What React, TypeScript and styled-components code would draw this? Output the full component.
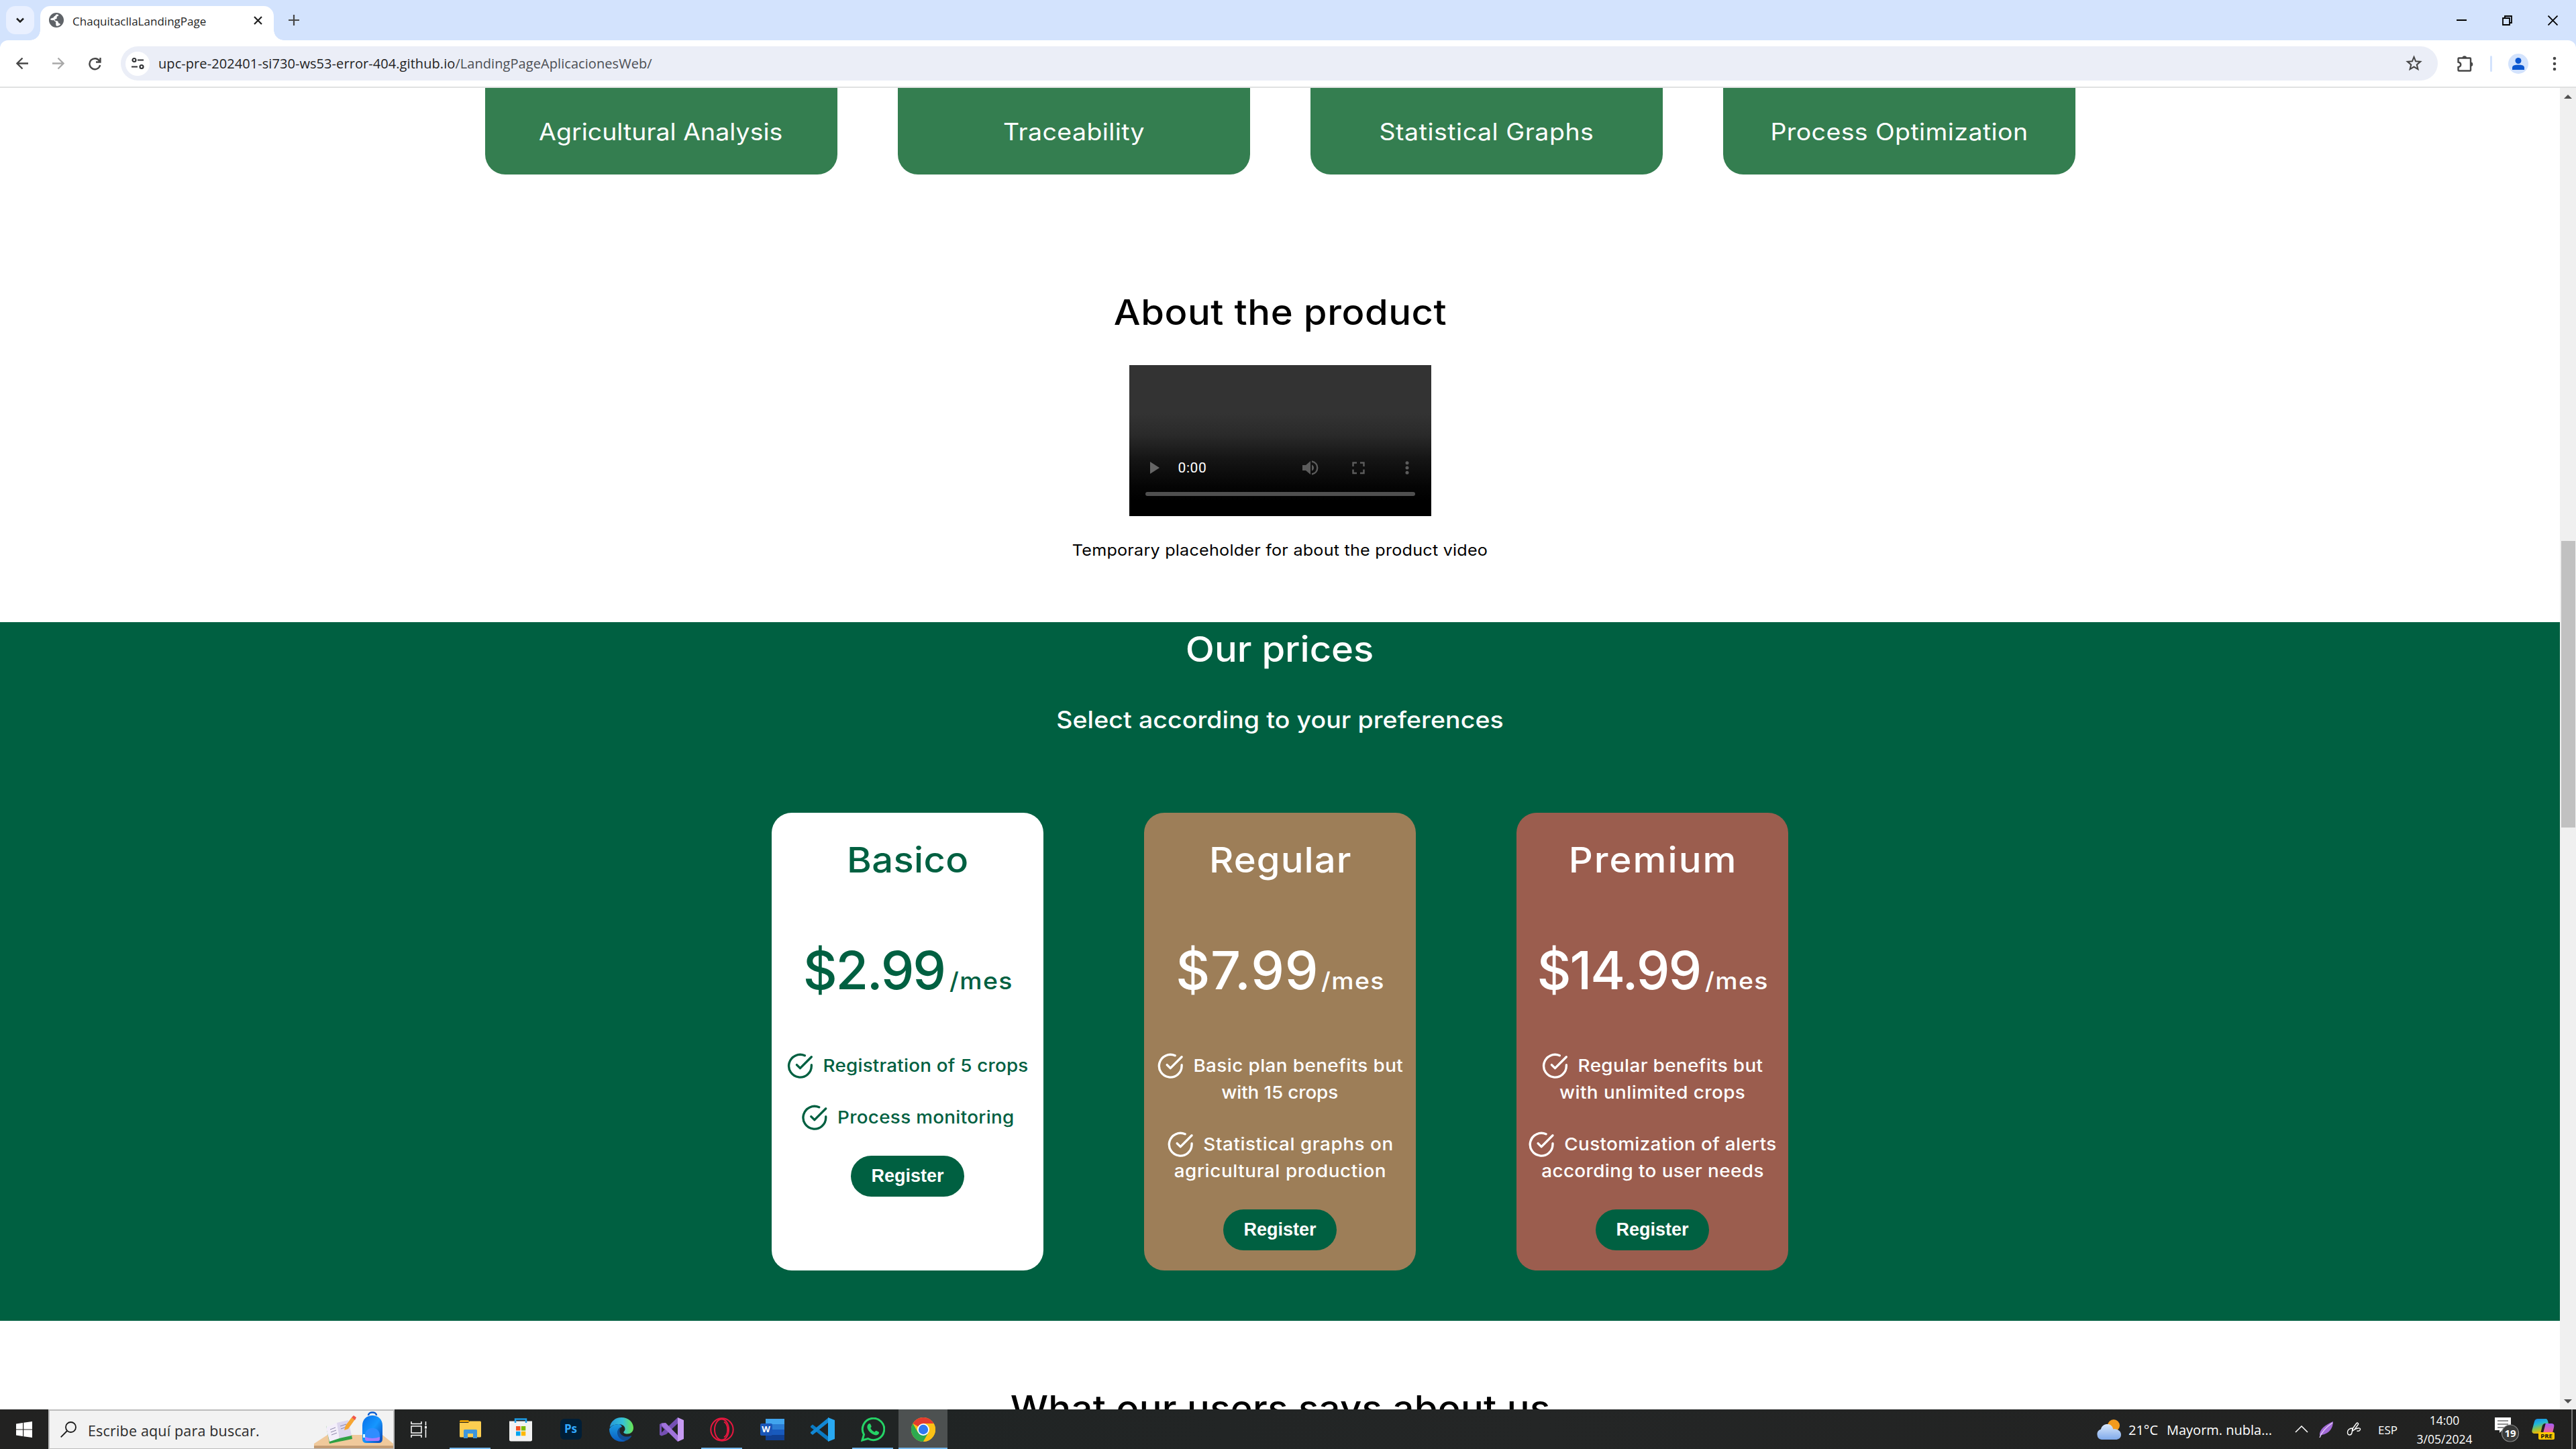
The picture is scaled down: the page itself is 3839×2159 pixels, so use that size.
import React from "react";
import styled, { createGlobalStyle } from "styled-components";

const GREEN = "#006041";

/* Horizontal stretch that gives the page face its wide, round letters. */
const WIDE = 1.07;

const GlobalStyle = createGlobalStyle`
  * { box-sizing: border-box; }
  html, body { margin: 0; padding: 0; }
  body { width: 3839px; height: 2159px; overflow: hidden; background: #fff; }
  svg { display: block; flex: none; }
`;

const Screen = styled.div`
  width: 3839px;
  height: 2159px;
  display: flex;
  flex-direction: column;
  overflow: hidden;
  font-family: Inter, "Liberation Sans", sans-serif;
`;

/* ---------- Browser chrome ---------- */

const TabStrip = styled.div`
  height: 60px;
  flex: none;
  display: flex;
  align-items: flex-end;
  padding-left: 9px;
  background: #d3e3fd;
`;

const TabSearch = styled.div`
  width: 42px;
  height: 42px;
  margin: 0 9px 9px 0;
  border-radius: 14px;
  background: #e9f0ff;
  display: flex;
  align-items: center;
  justify-content: center;
`;

const Tab = styled.div`
  position: relative;
  width: 348px;
  height: 51px;
  padding: 0 17px 9px 13px;
  display: flex;
  align-items: center;
  border-radius: 15px 15px 0 0;
  background: #fff;
  &::before,
  &::after {
    content: "";
    position: absolute;
    bottom: 0;
    width: 15px;
    height: 15px;
  }
  &::before {
    left: -15px;
    background: radial-gradient(circle at 0 0, transparent 14.5px, #fff 15px);
  }
  &::after {
    right: -15px;
    background: radial-gradient(circle at 100% 0, transparent 14.5px, #fff 15px);
  }
`;

const TabTitle = styled.span`
  flex: 1;
  padding: 3px 0 0 13px;
  font: 400 17px/24px "Open Sans", sans-serif;
  letter-spacing: 0.02px;
  color: #1f1f1f;
`;

const NewTab = styled.div`
  width: 60px;
  height: 60px;
  display: flex;
  align-items: center;
  justify-content: center;
`;

const WindowControls = styled.div`
  margin-left: auto;
  height: 60px;
  display: flex;
`;

const WindowButton = styled.div`
  width: 68.4px;
  display: flex;
  align-items: center;
  justify-content: center;
`;

const ToolbarBack = styled.div`
  height: 71px;
  flex: none;
  background: #d3e3fd;
`;

const Toolbar = styled.div`
  height: 71px;
  display: flex;
  align-items: center;
  padding: 0 17px 0 7px;
  background: #fff;
  border-bottom: 2px solid #e0e1e1;
  border-radius: 12px 12px 0 0;
`;

const ToolCell = styled.div<{ $w: number; $shift?: number }>`
  width: ${(p) => p.$w}px;
  padding-left: ${(p) => p.$shift ?? 0}px;
  display: flex;
  align-items: center;
  justify-content: center;
`;

const Omnibox = styled.div`
  flex: 1;
  height: 51px;
  margin-left: 12px;
  padding: 0 23px 0 7px;
  display: flex;
  align-items: center;
  border-radius: 26px;
  background: #ebeef7;
`;

const SiteInfo = styled.div`
  width: 36px;
  height: 36px;
  margin-right: 13px;
  border-radius: 50%;
  background: #fff;
  display: flex;
  align-items: center;
  justify-content: center;
`;

const Url = styled.div`
  flex: 1;
  font: 400 20px/26px "Open Sans", sans-serif;
  letter-spacing: 0.07px;
  color: #1f1f1f;
`;

const UrlPath = styled.span`
  color: #4c4f54;
`;

const Separator = styled.div`
  width: 3px;
  height: 24px;
  border-radius: 2px;
  background: #d3e3fd;
`;

const Avatar = styled.div`
  width: 30px;
  height: 30px;
  border-radius: 50%;
  background: #d3e3fd;
  overflow: hidden;
`;

/* ---------- Page ---------- */

const Viewport = styled.div`
  height: 1969px;
  flex: none;
  display: flex;
  overflow: hidden;
`;

const Page = styled.main`
  flex: 1;
  height: 1969px;
  overflow: hidden;
  background: #fff;
`;

const Scrollbar = styled.div`
  width: 24px;
  padding: 10px 0 9px;
  display: flex;
  flex-direction: column;
  align-items: center;
  background: #f0f0f0;
`;

const ScrollThumb = styled.div`
  width: 21px;
  height: 427px;
  margin: 659px 0 auto;
  background: #c1c1c1;
`;

const Text = styled.span<{ $ls: number }>`
  display: block;
  white-space: nowrap;
  letter-spacing: ${(p) => p.$ls}px;
  margin-right: ${(p) => -p.$ls}px;
`;

const WideText = styled(Text)`
  transform: scaleX(${WIDE});
`;

const ServiceRow = styled.section`
  height: 129px;
  display: flex;
  justify-content: center;
  gap: 90px;
`;

const ServiceCard = styled.div`
  width: 525px;
  padding-top: 38px;
  display: flex;
  justify-content: center;
  border-radius: 0 0 30px 30px;
  background: #347e50;
  color: #fff;
  font-size: 35px;
  line-height: 54px;
`;

const Section = styled.section<{ $pt: number; $h?: number; $green?: boolean }>`
  height: ${(p) => (p.$h ? `${p.$h}px` : "auto")};
  padding-top: ${(p) => p.$pt}px;
  display: flex;
  flex-direction: column;
  align-items: center;
  background: ${(p) => (p.$green ? GREEN : "#fff")};
  color: ${(p) => (p.$green ? "#fff" : "#000")};
`;

const Heading = styled.h2`
  margin: 0;
  font-size: 52.5px;
  font-weight: 500;
  line-height: 81px;
`;

const Subtitle = styled.h3`
  margin: 37px 0 112px;
  font-size: 35px;
  font-weight: 500;
  line-height: 54px;
`;

const Video = styled.div`
  width: 450px;
  height: 225px;
  margin: 38px 0 33px;
  padding: 0 24px 30px;
  display: flex;
  flex-direction: column;
  justify-content: flex-end;
  background: linear-gradient(#333 0, #333 32%, #2a2a2a 46%, #151515 62%, #050505 80%, #000 90%);
`;

const VideoControls = styled.div`
  height: 30px;
  margin-bottom: 21px;
  display: flex;
  align-items: center;
`;

const VideoTime = styled.span`
  flex: 1;
  padding-left: 28px;
  font: 400 21px/30px Roboto, sans-serif;
  letter-spacing: 0.6px;
  color: #fff;
`;

const ControlIcon = styled.div<{ $gap: number }>`
  margin-left: ${(p) => p.$gap}px;
`;

const VideoTrack = styled.div`
  height: 6px;
  border-radius: 3px;
  background: #4f4f4f;
`;

const Caption = styled.p`
  margin: 0;
  font-size: 23.5px;
  line-height: 36px;
`;

const Plans = styled.div`
  display: flex;
  gap: 150px;
`;

const PlanCard = styled.article<{ $bg: string; $fg: string }>`
  width: 405px;
  height: 682px;
  padding-top: 30px;
  display: flex;
  flex-direction: column;
  align-items: center;
  border-radius: 30px;
  background: ${(p) => p.$bg};
  color: ${(p) => p.$fg};
  font-weight: 500;
`;

const Price = styled.div`
  height: 120px;
  margin: 63px 0;
  display: flex;
  align-items: baseline;
  gap: 5px;
  font-size: 79px;
  line-height: 120px;
`;

const Period = styled.span`
  margin-right: 6px;
  font-size: 35px;
  line-height: 42px;
  transform: scaleX(${WIDE});
  transform-origin: left;
`;

const Feature = styled.div`
  margin-bottom: 37px;
  display: flex;
  flex-direction: column;
  align-items: center;
  font-size: 26px;
  line-height: 40px;
`;

const FeatureLine = styled.div`
  height: 40px;
  display: flex;
  align-items: center;
  gap: 13px;
  transform: scaleX(${WIDE});
`;

const RegisterButton = styled.button`
  width: 169px;
  height: 61px;
  padding: 0 0 1px;
  border: 0;
  border-radius: 31px;
  background: ${GREEN};
  color: #fff;
  font: 700 27px/40px "Liberation Sans", Arial, sans-serif;
`;

/* ---------- Taskbar ---------- */

const Taskbar = styled.footer`
  height: 59px;
  flex: none;
  display: flex;
  background: linear-gradient(90deg, #222221, #202424 35%, #242626 60%, #212120);
  color: #fff;
  font-family: "Open Sans", sans-serif;
`;

const TaskCell = styled.div<{ $w: number; $shift?: number }>`
  width: ${(p) => p.$w}px;
  flex: none;
  padding-left: ${(p) => p.$shift ?? 0}px;
  display: flex;
  align-items: center;
  justify-content: center;
`;

const SearchBox = styled.div`
  width: 516px;
  flex: none;
  padding-left: 16px;
  display: flex;
  align-items: center;
  border: 2px solid #bcbcbc;
  border-bottom-width: 1px;
  background: #f2f2f2;
`;

const SearchText = styled.span`
  flex: 1;
  padding: 3px 0 0 17px;
  font-size: 21.5px;
  line-height: 30px;
  letter-spacing: 0.17px;
  color: #2b2b2b;
`;

const Apps = styled.div`
  display: flex;
  margin-left: 3px;
`;

const AppButton = styled.div<{ $open?: boolean; $active?: boolean }>`
  width: ${(p) => (p.$active ? 73 : p.$open ? 61 : 75)}px;
  margin: 0 ${(p) => (p.$active ? 1 : p.$open ? 7 : 0)}px;
  display: flex;
  align-items: center;
  justify-content: center;
  background: ${(p) => (p.$active ? "#4d5151" : "transparent")};
  box-shadow: ${(p) => (p.$open || p.$active ? "inset 0 -2px #76b9ed" : "none")};
`;

const Tray = styled.div`
  margin-left: auto;
  display: flex;
  align-items: stretch;
`;

const TrayText = styled.div<{ $w: number; $size: number; $center?: boolean }>`
  width: ${(p) => p.$w}px;
  padding-top: 2px;
  display: flex;
  align-items: center;
  justify-content: ${(p) => (p.$center ? "center" : "flex-start")};
  font-size: ${(p) => p.$size}px;
  white-space: nowrap;
`;

const Clock = styled.div`
  width: 112px;
  padding-top: 2px;
  text-align: center;
  font-size: 17.5px;
  line-height: 28px;
`;

const ShowDesktop = styled.div`
  width: 7px;
  margin-left: 22px;
  border-left: 2px solid #777;
`;

/* ---------- Icons ---------- */

const Line = ({ d, w, h, vb, c = "#474747", s = 2 }: { d: string; w: number; h: number; vb: string; c?: string; s?: number }) => (
  <svg width={w} height={h} viewBox={vb} fill="none" stroke={c} strokeWidth={s}>
    <path d={d} />
  </svg>
);

const Globe = () => (
  <svg width="22" height="22" viewBox="0 0 22 22">
    <circle cx="11" cy="11" r="11" fill="#5f6368" />
    <path d="M11.5 2.2c-2 1-1.8 2.6-3.4 3-1.3.4-.8 2.2-2 2.4-1.4.2-3.4.8-4 2 0 1.500 2.600 1.600 4.500 1.500 1.700 0 1 1.700 2.600 1.900 1.200.2 1 1.200 1 2.300 0 1.500 0 2.500.8 4.500 2.500 0 4.400-.8 6-2.400-.6-2-3-1.200-3-2.600 0-1.500-1.300-2.500-2.600-2.800-2 0-3.100-.6-2.900-1.800.2-1.200 2.400-.6 3.200-1.800.7-1-.9-1.900.3-2.800.9-.7 2-.6 2.300-1.600.2-.8-1-1.800-2.800-1.800z" fill="#fff" />
  </svg>
);

/* Narrowed by the line's own stretch, so that the ring is drawn round. */
const CheckCircle = () => (
  <svg width={40.5 / WIDE} height="40.5" viewBox="0 0 24 24" preserveAspectRatio="none" fill="none" stroke="currentColor" strokeWidth="2" strokeLinecap="round" strokeLinejoin="round">
    <path d="M22 11.080V12a10 10 0 1 1-5.930-9.140" />
    <path d="M22 4 12 14.010l-3-3" />
  </svg>
);

const SearchArt = () => (
  <svg width="120" height="56" viewBox="468 2102 120 56">
    <defs>
      <linearGradient id="bag" x1="0" x2="1" y2="1"><stop offset="0" stopColor="#0a6fe8" /><stop offset=".5" stopColor="#1597ff" /><stop offset="1" stopColor="#0b45b5" /></linearGradient>
    </defs>
    <path d="M490 2138h82l16 13v4H470v-4z" fill="#f0c99b" />
    <path d="M470 2154h118v4H470z" fill="#c39b73" />
    <path d="m488 2124 5 27 34-7-1-6-32 6z" fill="#2fa044" />
    <path d="m488 2127 16-7 4 23-15 5z" fill="#f3eefa" />
    <path d="m504 2120 17-4 5 23-18 4z" fill="#dcd6ee" />
    <path d="m494 2130 8-3m-7 7 8-3m-7 7 8-3m5-10 9-3m-8 7 9-3" stroke="#8c86a8" strokeWidth="1" />
    <path d="m515 2131 2-7 9-12 5 3-10 14z" fill="#f6a531" />
    <path d="m526 2112 3-3 4 3-2 4z" fill="#f0584a" />
    <path d="M551 2109c0-6 12-6 12 0" fill="none" stroke="#0b5ed0" strokeWidth="2.500" />
    <path d="M542 2124c0-20 30-20 30 0v20q0 6-6 6h-18q-6 0-6-6z" fill="url(#bag)" />
    <path d="M546 2139c0-15 22-15 22 0v5q0 3-3 3h-16q-3 0-3-3z" fill="#2f8dff" />
    <path d="M546 2141q11 4 22 0v3q0 3-3 3h-16q-3 0-3-3z" fill="#a67cff" />
    <rect x="543" y="2137" width="3" height="5" fill="#dff" />
  </svg>
);

const Explorer = () => (
  <svg width="32" height="28" viewBox="0 0 32 28">
    <path d="M0 1.500Q0 0 1.500 0H13l2 3H0z" fill="#e09b00" />
    <path d="M0 4h13l2-2.500h15.500Q32 1.500 32 3v21q0 1.500-1.500 1.500h-29Q0 25.500 0 24z" fill="#fcce51" />
    <path d="M6 27V15.500Q6 14 7.500 14h17q1.500 0 1.500 1.500V27h-6v-7h-8v7z" fill="#3d96dc" />
  </svg>
);

const Store = () => (
  <svg width="36" height="36" viewBox="0 0 36 36">
    <path d="M1 5.500h34V33q0 2.500-2.500 2.500h-29Q1 35.500 1 33z" fill="#f2f2f2" />
    <path d="M10 8V2.500h16V8" fill="none" stroke="#1f9ee8" strokeWidth="2.500" />
    <path d="M11 13h6.500v6.500H11z" fill="#f25022" /><path d="M18.800 13h6.500v6.500h-6.500z" fill="#7fba00" />
    <path d="M11 20.800h6.500v6.500H11z" fill="#00a4ef" /><path d="M18.800 20.800h6.500v6.500h-6.500z" fill="#ffb900" />
  </svg>
);

const PhotoshopBox = styled.div`
  width: 32px;
  height: 31px;
  border-radius: 6px;
  background: #001e36;
  color: #31a8ff;
  text-align: center;
  font: 700 17px/29px "Open Sans", sans-serif;
`;

const Edge = () => (
  <svg width="36" height="36" viewBox="0 0 36 36">
    <defs>
      <linearGradient id="e1" x1="0" x2="1"><stop offset="0" stopColor="#2597d8" /><stop offset=".55" stopColor="#35c1d8" /><stop offset="1" stopColor="#6ae84f" /></linearGradient>
      <linearGradient id="e2" x2="0" y2="1"><stop offset="0" stopColor="#1b9de2" /><stop offset="1" stopColor="#0a5cc0" /></linearGradient>
    </defs>
    <path d="M.6 15C2 6 9 0 18 0c11 0 18 7.500 18 15.500 0 6-4.500 9-9 9-4 0-6.500-1.500-5.500-3 1.500-1.700 2-2.500 2-4.500 0-4-4-7-9.500-7-6 0-11 2.500-13.400 5z" fill="url(#e1)" />
    <path d="M14 10c-7 0-12.500 3.500-14 7.500C0 28 8 36 18 36c3 0 5-.5 7-1.500-8-1-12.500-6.500-12.500-12 0-5 3-7.500 6.500-8.500-1-2.500-3-4-5-4z" fill="url(#e2)" />
    <path d="M17 14.500c-3 1.500-5 4.500-5 8 0 6 5 12 13 12 3.500-1.300 6-3.500 8-6.300.4-.8-.2-1.300-.9-.9-1.500.8-3.500 1.300-5.600 1.300-6.500 0-11-4-11-8.600 0-2.300.9-4 1.500-5.500z" fill="#114d93" />
  </svg>
);

const VisualStudio = () => (
  <svg width="36" height="36" viewBox="0 0 36 36">
    <path fillRule="evenodd" d="M0 10l3-1.500 7.500 7L27 0v9L10 25l-7 2.500L0 26zM3 13.500v9l4.500-4.500z" fill="#7550b4" />
    <path d="M3 8.500 9 8l18 18.500V36L3 12z" fill="#a173dc" />
    <path d="m27 0 9 4v28l-9 4z" fill="#c79af2" />
  </svg>
);

const Opera = () => (
  <svg width="36" height="36" viewBox="0 0 36 36" fill="none" stroke="#e8173f">
    <circle cx="18" cy="18" r="16.700" strokeWidth="2" />
    <ellipse cx="17.500" cy="18" rx="10.500" ry="15.500" strokeWidth="2" />
    <path d="M21 6.500c7 4 7 19 0 23" strokeWidth="1.800" />
  </svg>
);

const WordBox = styled.div`
  width: 36px;
  height: 32px;
  padding: 7px 0 7px;
  background: linear-gradient(#41a5ee 0 25%, #2b7cd3 0 50%, #185abd 0 75%, #103f91 0) 8px 0 / 28px 32px no-repeat;
`;

const WordBadge = styled.div`
  width: 18px;
  height: 18px;
  border-radius: 2px;
  background: #1a56b8;
  text-align: center;
  font: 700 13px/17px "Open Sans", sans-serif;
`;

const VsCode = () => (
  <svg width="36" height="36" viewBox="0 0 36 36">
    <path d="M0 13l3-2.500L27 29v7L0 14.500z" fill="#0a7bc4" />
    <path d="M0 23.500l3 2.500L27 7V0L0 22z" fill="#1288d4" />
    <path d="m26 0 10 4v28l-10 4z" fill="#29a9f2" />
  </svg>
);

const WhatsApp = () => (
  <svg width="36" height="36" viewBox="0 0 36 36">
    <path d="M2 34 4.500 25.500A16.200 16.200 0 1 1 10.500 31.500z" fill="none" stroke="#25d366" strokeWidth="3" />
    <path d="M11.500 9.500c.9-.8 2.300-.7 2.800.4l1.300 3c.3.9-.2 1.500-1.400 2.800 1.500 2.900 3.600 4.800 6.400 6 1.200-1.400 1.700-2.200 2.800-1.700l3 1.500c.9.500.7 2.200-.2 3.300-1.500 1.800-4 2-6.700 1-4.500-1.700-7.500-4.600-9.500-8.800-1.200-2.600-.7-5.700 1.500-7.500z" fill="#25d366" />
  </svg>
);

const Chrome = () => (
  <svg width="36" height="36" viewBox="0 0 36 36">
    <circle cx="18" cy="18" r="18" fill="#fbc116" />
    <path d="M18 18 2.400 9A18 18 0 0 1 33.600 9z" fill="#e33b2e" />
    <path d="M2.400 9A18 18 0 0 0 18 36l7.800-13.500L18 18l-7.800 4.500z" fill="#2da94f" />
    <path d="M18 9h15.600A18 18 0 0 1 18 36l7.800-13.500z" fill="#fbc116" />
    <circle cx="18" cy="18" r="9" fill="#fff" />
    <circle cx="18" cy="18" r="7.200" fill="#3079f0" />
  </svg>
);

const Weather = () => (
  <svg width="37" height="30" viewBox="0 0 37 30">
    <defs><linearGradient id="cl" x2="0" y2="1"><stop offset="0" stopColor="#dbe9fb" /><stop offset="1" stopColor="#7fa9ea" /></linearGradient></defs>
    <circle cx="26" cy="9" r="9" fill="#f39a1c" />
    <path d="M8 30a8 8 0 0 1-1-15.500C8 9 13 6.500 17.500 7c4.500.500 7 3.500 7.800 7.500C31 13 37 17 37 22.500S33 30 29 30z" fill="url(#cl)" />
  </svg>
);

const Feather = () => (
  <svg width="22" height="24" viewBox="0 0 22 24">
    <path d="M1 21C0 12 9 5 21 0c0 9-5 18-17 20z" fill="#a36bd8" />
    <path d="M1 24C4 15 10 9 20 2" stroke="#e7cffb" strokeWidth="1.300" fill="none" />
  </svg>
);

const Pen = () => (
  <svg width="22" height="22" viewBox="0 0 22 22" fill="none" stroke="#fff" strokeWidth="1.400">
    <path d="m9 13 .5-4L15 1.500q1-1 2 0t.3 2L12 11z" />
    <path d="M9 9c-5 0-8 3-7.500 7S7 20 8 16l1-7m3 2c3-2 8-3 8.500-1s-2 4-5 3" />
  </svg>
);

const Notifications = () => (
  <svg width="38" height="38" viewBox="3717 2117 38 38">
    <path d="M3718 2118h24v19h-13l-4 4v-4h-7z" fill="#fff" />
    <path d="M3722 2123h16m-16 5h16m-16 5h10" stroke="#222" strokeWidth="1.200" />
    <circle cx="3741" cy="2141.500" r="12.500" fill="#3a3b3a" stroke="#8b8b8b" strokeWidth="1.200" />
    <text x="3741" y="2147" textAnchor="middle" fill="#fff" fontFamily="Open Sans" fontWeight="700" fontSize="15">19</text>
  </svg>
);

const Copilot = () => (
  <svg width="34" height="32" viewBox="0 0 34 32">
    <defs>
      <linearGradient id="c1" x2=".3" y2="1"><stop offset="0" stopColor="#1684e8" /><stop offset=".4" stopColor="#20b8d8" /><stop offset=".7" stopColor="#8bc34a" /><stop offset="1" stopColor="#f7b500" /></linearGradient>
      <linearGradient id="c2" x2="0" y2="1"><stop offset="0" stopColor="#a45cf5" /><stop offset="1" stopColor="#f4648c" /></linearGradient>
    </defs>
    <path d="M9 0h12c2 0 3 2 4 7h-5c-3 0-4 2-5 7l-2 8H5c-4 0-5-2-4.500-5L4 4c1-3 2.500-4 5-4z" fill="url(#c1)" />
    <path d="M21 7h8c4 0 5 2 4 6l-2 8H17l3-11c0-1 .4-2 1-3z" fill="url(#c2)" />
    <rect x="10" y="20" width="24" height="11" rx="2" fill="#ffc700" />
    <text x="22" y="29" textAnchor="middle" fill="#111" fontFamily="Open Sans" fontWeight="700" fontSize="9.500">PRE</text>
  </svg>
);

/* ---------- Content ---------- */

type Copy = [text: string, spacing: number];

const services: Copy[] = [
  ["Agricultural Analysis", 0.02],
  ["Traceability", 0.39],
  ["Statistical Graphs", 0.5],
  ["Process Optimization", 0.4],
];

const plans: { name: Copy; price: Copy; bg: string; fg: string; features: Copy[][] }[] = [
  {
    name: ["Basico", 0.3],
    price: ["$2.99", -2.3],
    bg: "#fff",
    fg: GREEN,
    features: [[["Registration of 5 crops", 0.19]], [["Process monitoring", 0.29]]],
  },
  {
    name: ["Regular", 1.0],
    price: ["$7.99", 0.8],
    bg: "#9d7e58",
    fg: "#fff",
    features: [
      [["Basic plan benefits but", 0.4], ["with 15 crops", -0.1]],
      [["Statistical graphs on", 0.53], ["agricultural production", 0.56]],
    ],
  },
  {
    name: ["Premium", 1.9],
    price: ["$14.99", -2],
    bg: "#9b5d4e",
    fg: "#fff",
    features: [
      [["Regular benefits but", 0.35], ["with unlimited crops", 0.42]],
      [["Customization of alerts", 0.34], ["according to user needs", 0.4]],
    ],
  },
];

const apps: { icon: React.ReactNode; open?: boolean; active?: boolean }[] = [
  { icon: <Explorer />, open: true },
  { icon: <Store /> },
  { icon: <PhotoshopBox>Ps</PhotoshopBox> },
  { icon: <Edge /> },
  { icon: <VisualStudio /> },
  { icon: <Opera />, open: true },
  { icon: <WordBox><WordBadge>W</WordBadge></WordBox> },
  { icon: <VsCode /> },
  { icon: <WhatsApp />, open: true },
  { icon: <Chrome />, active: true },
];

export default function App() {
  return (
    <Screen>
      <GlobalStyle />
      <TabStrip>
        <TabSearch>
          <Line d="m1 1.500 5 5 5-5" w={12} h={8} vb="0 0 12 8" c="#1f1f1f" s={2.5} />
        </TabSearch>
        <Tab>
          <Globe />
          <TabTitle>ChaquitacllaLandingPage</TabTitle>
          <Line d="m1 1 11 11M12 1 1 12" w={13} h={13} vb="0 0 13 13" c="#1f1f1f" s={2.2} />
        </Tab>
        <NewTab>
          <Line d="M8 0v16M0 8h16" w={16} h={16} vb="0 0 16 16" s={2.2} />
        </NewTab>
        <WindowControls>
          <WindowButton>
            <Line d="M0 1h15" w={15} h={2} vb="0 0 15 2" c="#000" />
          </WindowButton>
          <WindowButton>
            <Line d="M1 4h10v10H1zM4 4V1h10v10h-3" w={15} h={15} vb="0 0 15 15" c="#000" s={1.8} />
          </WindowButton>
          <WindowButton>
            <Line d="m.5.5 14 14m0-14-14 14" w={15} h={15} vb="0 0 15 15" c="#000" s={1.8} />
          </WindowButton>
        </WindowControls>
      </TabStrip>
      <ToolbarBack>
        <Toolbar>
          <ToolCell $w={53}>
            <Line d="M18 9.500H2M9.500 1.500l-8 8 8 8" w={19} h={19} vb="0 0 19 19" s={2.3} />
          </ToolCell>
          <ToolCell $w={53}>
            <Line d="M1 9.500h16M9.500 1.500l8 8-8 8" w={19} h={19} vb="0 0 19 19" c="#a9a9a9" s={2.3} />
          </ToolCell>
          <ToolCell $w={55} $shift={2}>
            <Line d="M16.500 6.500A8 8 0 1 0 17.200 12M17.500 1v6.500H11" w={20} h={20} vb="0 0 20 20" s={2.4} />
          </ToolCell>
          <Omnibox>
            <SiteInfo>
              <Line d="M9 4.500h9M0 14.500h9M4 2a2.500 2.500 0 1 1 0 5 2.500 2.500 0 0 1 0-5zM15 12a2.500 2.500 0 1 1 0 5 2.500 2.500 0 0 1 0-5z" w={19} h={19} vb="0 0 19 19" c="#303134" s={2.2} />
            </SiteInfo>
            <Url>
              upc-pre-202401-si730-ws53-error-404.github.io<UrlPath>/LandingPageAplicacionesWeb/</UrlPath>
            </Url>
            <Line d="m12 2.800 2.500 6.200 6.700.5-5.100 4.300 1.600 6.500-5.700-3.500-5.700 3.500 1.600-6.500-5.100-4.300 6.700-.5z" w={25} h={25} vb="0 0 24 24" />
          </Omnibox>
          <ToolCell $w={78} $shift={4}>
            <svg width="26" height="26" viewBox="0 0 26 26">
              <path d="M2.500 5.500q0-1 1-1h16.500q1 0 1 1v17q0 1-1 1H3.500q-1 0-1-1v-4.500c5-1 5-6.500 0-7.500z" fill="none" stroke="#474747" strokeWidth="2.400" />
              <path d="M8.500 4.500a3.300 3.300 0 0 1 6.600 0zM21 10.500a3.300 3.300 0 0 1 0 6.600z" fill="#474747" />
            </svg>
          </ToolCell>
          <Separator />
          <ToolCell $w={78}>
            <Avatar>
              <svg width="30" height="30" viewBox="0 0 30 30" fill="#0b57d0">
                <circle cx="15" cy="10.500" r="4.500" />
                <path d="M6 24v-3.500q0-4 9-4t9 4V24z" />
              </svg>
            </Avatar>
          </ToolCell>
          <ToolCell $w={30}>
            <svg width="6" height="22" viewBox="0 0 6 22" fill="#474747">
              <circle cx="3" cy="3" r="2.300" /><circle cx="3" cy="11" r="2.300" /><circle cx="3" cy="19" r="2.300" />
            </svg>
          </ToolCell>
        </Toolbar>
      </ToolbarBack>

      <Viewport>
        <Page>
          <ServiceRow>
            {services.map(([text, ls]) => (
              <ServiceCard key={text}><WideText $ls={ls}>{text}</WideText></ServiceCard>
            ))}
          </ServiceRow>

          <Section $pt={165} $h={667}>
            <Heading><WideText $ls={0.54}>About the product</WideText></Heading>
            <Video>
              <VideoControls>
                <ControlIcon $gap={6}>
                  <svg width="15" height="18" viewBox="0 0 15 18"><path d="M1 0v18l14-9z" fill="#666" /></svg>
                </ControlIcon>
                <VideoTime>0:00</VideoTime>
                <ControlIcon $gap={0}>
                  <svg width="24" height="22" viewBox="0 0 24 22">
                    <path d="M0 7v8h5l7 6V1L5 7zM14 6.500v9q3-1.500 3-4.500t-3-4.500z" fill="#5c5c5c" />
                    <path d="M14 1.500c11 2 11 17 0 19" fill="none" stroke="#5c5c5c" strokeWidth="2.400" />
                  </svg>
                </ControlIcon>
                <ControlIcon $gap={50}>
                  <Line d="M1.500 7V1.500H7M12 1.500h5.500V7M17.500 11.500V17H12M7 17H1.500v-5.500" w={19} h={19} vb="0 0 19 19" c="#5c5c5c" s={2.4} />
                </ControlIcon>
                <ControlIcon $gap={60}>
                  <svg width="14.500" height="22" viewBox="0 0 14.500 22" fill="#5c5c5c">
                    <circle cx="3" cy="3.700" r="2.500" /><circle cx="3" cy="11" r="2.500" /><circle cx="3" cy="18.300" r="2.500" />
                  </svg>
                </ControlIcon>
              </VideoControls>
              <VideoTrack />
            </Video>
            <Caption><WideText $ls={0.22}>Temporary placeholder for about the product video</WideText></Caption>
          </Section>

          <Section $pt={0} $h={1041} $green>
            <Heading><WideText $ls={0}>Our prices</WideText></Heading>
            <Subtitle><WideText $ls={0.1}>Select according to your preferences</WideText></Subtitle>
            <Plans>
              {plans.map((plan) => (
                <PlanCard key={plan.name[0]} $bg={plan.bg} $fg={plan.fg}>
                  <Heading><WideText $ls={plan.name[1]}>{plan.name[0]}</WideText></Heading>
                  <Price>
                    <Text $ls={plan.price[1]}>{plan.price[0]}</Text>
                    <Period><Text $ls={1.3}>/mes</Text></Period>
                  </Price>
                  {plan.features.map((lines) => (
                    <Feature key={lines[0][0]}>
                      {lines.map(([text, ls], i) => (
                        <FeatureLine key={text}>
                          {i === 0 && <CheckCircle />}
                          <Text $ls={ls}>{text}</Text>
                        </FeatureLine>
                      ))}
                    </Feature>
                  ))}
                  <RegisterButton>Register</RegisterButton>
                </PlanCard>
              ))}
            </Plans>
          </Section>

          <Section $pt={90}>
            <Heading><WideText $ls={0.3}>What our users says about us</WideText></Heading>
          </Section>
        </Page>
        <Scrollbar>
          <svg width="12" height="6" viewBox="0 0 12 6"><path d="M0 6 6 0l6 6z" fill="#505050" /></svg>
          <ScrollThumb />
          <svg width="12" height="6" viewBox="0 0 12 6"><path d="m0 0 6 6 6-6z" fill="#505050" /></svg>
        </Scrollbar>
      </Viewport>

      <Taskbar>
        <TaskCell $w={72}>
          <svg width="24" height="24" viewBox="0 0 24 24" fill="#fff">
            <path d="M0 3.400 10 2v9.400H0zM11.200 1.800 24 0v11.400H11.200zM0 12.600h10V22L0 20.600zM11.200 12.600H24V24l-12.800-1.800z" />
          </svg>
        </TaskCell>
        <SearchBox>
          <svg width="24" height="24" viewBox="0 0 24 24" fill="none" stroke="#1a1a1a" strokeWidth="1.800">
            <circle cx="15.500" cy="8.500" r="7.500" /><path d="M10 14 .7 23.300" />
          </svg>
          <SearchText>Escribe aquí para buscar.</SearchText>
          <SearchArt />
        </SearchBox>
        <TaskCell $w={72}>
          <svg width="24" height="24" viewBox="0 0 24 24" fill="none" stroke="#fff" strokeWidth="1.500">
            <path d="M1 0v3.500h15V0M1 7h15v10H1zM1 24v-3.500h15V24M22.500 0v6M22.500 11.500V24" />
            <path d="M21 7h3v3.500h-3z" fill="#fff" stroke="none" />
          </svg>
        </TaskCell>
        <Apps>
          {apps.map((app, i) => (
            <AppButton key={i} $open={app.open} $active={app.active}>{app.icon}</AppButton>
          ))}
        </Apps>
        <Tray>
          <TaskCell $w={37}><Weather /></TaskCell>
          <TaskCell $w={11} />
          <TrayText $w={57} $size={20}>21°C</TrayText>
          <TrayText $w={182} $size={20}>Mayorm. nubla...</TrayText>
          <TaskCell $w={37}><Line d="m1 10 9-9 9 9" w={20} h={11} vb="0 0 20 11" c="#fff" s={1.5} /></TaskCell>
          <TaskCell $w={38}><Feather /></TaskCell>
          <TaskCell $w={44}><Pen /></TaskCell>
          <TrayText $w={57} $size={17} $center>ESP</TrayText>
          <Clock>14:00<br />3/05/2024</Clock>
          <TaskCell $w={71} $shift={3}><Notifications /></TaskCell>
          <TaskCell $w={40}><Copilot /></TaskCell>
          <ShowDesktop />
        </Tray>
      </Taskbar>
    </Screen>
  );
}
